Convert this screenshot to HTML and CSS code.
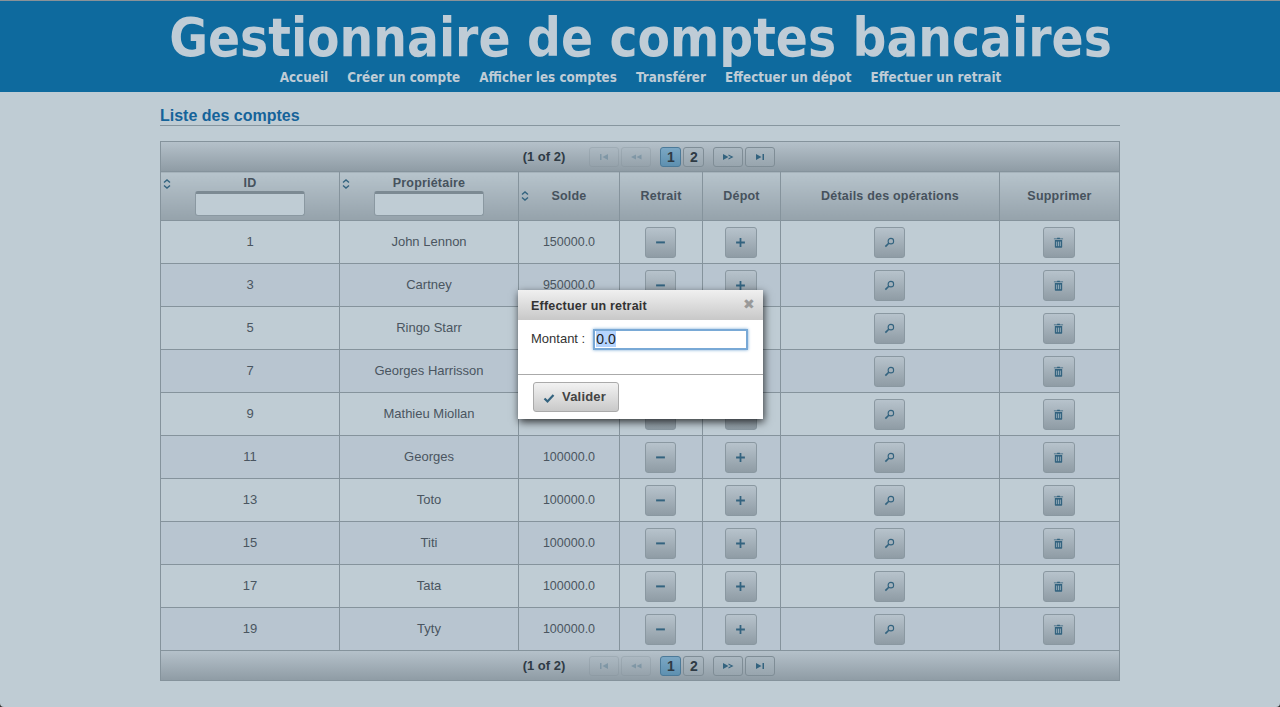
FILE: index.html

```html
<!DOCTYPE html>
<html lang="fr">
<head>
  <meta charset="UTF-8">
  <title>Gestionnaire de comptes bancaires</title>
  <link rel="stylesheet" href="styles.css">
</head>
<body>
  <svg class="defs" width="0" height="0">
    <symbol id="i-sort" viewBox="0 0 8 10"><path d="M1 3.500 4 1 7 3.500M1 6.500 4 9 7 6.500" fill="none" stroke="#33637f" stroke-width="1.400"/></symbol>
    <symbol id="i-minus" viewBox="0 0 10 10"><rect x="1" y="4" width="8" height="1.800" fill="#33637f"/></symbol>
    <symbol id="i-plus" viewBox="0 0 10 10"><path d="M4.200 1h1.600v3.200H9v1.600H5.800V9H4.200V5.800H1V4.200h3.200z" fill="#33637f"/></symbol>
    <symbol id="i-search" viewBox="0 0 12 12"><circle cx="7.500" cy="4.500" r="3" fill="none" stroke="#33637f" stroke-width="1.200"/><path d="M5.200 6.800 1.500 10.500" stroke="#33637f" stroke-width="1.800"/></symbol>
    <symbol id="i-trash" viewBox="0 0 12 12"><path d="M4.500 1.500V.8h3v.7H11v1H1v-1zM2 3.300h8V11a.8.8 0 0 1-.8.8H2.800A.8.8 0 0 1 2 11z" fill="#33637f"/><path d="M4 5v5M6 5v5M8 5v5" stroke="#b4c2cc" stroke-width=".8"/></symbol>
    <symbol id="i-first" viewBox="0 0 12 8"><path d="M2 1h1.500v6H2zM10 1v6L4.500 4z"/></symbol>
    <symbol id="i-prev" viewBox="0 0 12 8"><path d="M6 1.500V6.500L1 4zM11.500 1.500V6.500L6.500 4z"/></symbol>
    <symbol id="i-next" viewBox="0 0 12 8"><path d="M1 1v6l5.500-3zM6.500 1.500V2.700L9 4 6.500 5.300V6.500L11.500 4z"/></symbol>
    <symbol id="i-last" viewBox="0 0 12 8"><path d="M2 1v6l5.500-3zM8.500 1H10v6H8.500z"/></symbol>
  </svg>

  <header class="banner">
    <h1>Gestionnaire de comptes bancaires</h1>
    <nav class="menu">
      <a href="#">Accueil</a>
      <a href="#">Créer un compte</a>
      <a href="#">Afficher les comptes</a>
      <a href="#">Transférer</a>
      <a href="#">Effectuer un dépot</a>
      <a href="#">Effectuer un retrait</a>
    </nav>
  </header>

  <main class="content">
    <h2>Liste des comptes</h2>
    <div class="datatable">
      <div class="paginator">
        <span class="page-count">(1 of 2)</span>
        <span class="page-group">
          <span class="pg-btn off"><svg><use href="#i-first"/></svg></span>
          <span class="pg-btn off"><svg><use href="#i-prev"/></svg></span>
        </span>
        <span class="page-group">
          <span class="pg-num current">1</span>
          <span class="pg-num">2</span>
        </span>
        <span class="page-group">
          <span class="pg-btn"><svg><use href="#i-next"/></svg></span>
          <span class="pg-btn"><svg><use href="#i-last"/></svg></span>
        </span>
      </div>
      <table>
        <thead>
          <tr>
            <th class="c-id"><svg class="sort top"><use href="#i-sort"/></svg>ID<input class="filter" type="text"></th>
            <th class="c-owner"><svg class="sort top"><use href="#i-sort"/></svg>Propriétaire<input class="filter" type="text"></th>
            <th class="c-amount"><svg class="sort"><use href="#i-sort"/></svg>Solde</th>
            <th class="c-out">Retrait</th>
            <th class="c-in">Dépot</th>
            <th class="c-ops">Détails des opérations</th>
            <th>Supprimer</th>
          </tr>
        </thead>
        <tbody>
          <tr><td>1</td><td>John Lennon</td><td>150000.0</td><td><span class="btn"><svg><use href="#i-minus"/></svg></span></td><td><span class="btn wide"><svg><use href="#i-plus"/></svg></span></td><td><span class="btn"><svg><use href="#i-search"/></svg></span></td><td><span class="btn wide"><svg><use href="#i-trash"/></svg></span></td></tr>
          <tr><td>3</td><td>Cartney</td><td>950000.0</td><td><span class="btn"><svg><use href="#i-minus"/></svg></span></td><td><span class="btn wide"><svg><use href="#i-plus"/></svg></span></td><td><span class="btn"><svg><use href="#i-search"/></svg></span></td><td><span class="btn wide"><svg><use href="#i-trash"/></svg></span></td></tr>
          <tr><td>5</td><td>Ringo Starr</td><td></td><td><span class="btn"><svg><use href="#i-minus"/></svg></span></td><td><span class="btn wide"><svg><use href="#i-plus"/></svg></span></td><td><span class="btn"><svg><use href="#i-search"/></svg></span></td><td><span class="btn wide"><svg><use href="#i-trash"/></svg></span></td></tr>
          <tr><td>7</td><td>Georges Harrisson</td><td></td><td><span class="btn"><svg><use href="#i-minus"/></svg></span></td><td><span class="btn wide"><svg><use href="#i-plus"/></svg></span></td><td><span class="btn"><svg><use href="#i-search"/></svg></span></td><td><span class="btn wide"><svg><use href="#i-trash"/></svg></span></td></tr>
          <tr><td>9</td><td>Mathieu Miollan</td><td></td><td><span class="btn"><svg><use href="#i-minus"/></svg></span></td><td><span class="btn wide"><svg><use href="#i-plus"/></svg></span></td><td><span class="btn"><svg><use href="#i-search"/></svg></span></td><td><span class="btn wide"><svg><use href="#i-trash"/></svg></span></td></tr>
          <tr><td>11</td><td>Georges</td><td>100000.0</td><td><span class="btn"><svg><use href="#i-minus"/></svg></span></td><td><span class="btn wide"><svg><use href="#i-plus"/></svg></span></td><td><span class="btn"><svg><use href="#i-search"/></svg></span></td><td><span class="btn wide"><svg><use href="#i-trash"/></svg></span></td></tr>
          <tr><td>13</td><td>Toto</td><td>100000.0</td><td><span class="btn"><svg><use href="#i-minus"/></svg></span></td><td><span class="btn wide"><svg><use href="#i-plus"/></svg></span></td><td><span class="btn"><svg><use href="#i-search"/></svg></span></td><td><span class="btn wide"><svg><use href="#i-trash"/></svg></span></td></tr>
          <tr><td>15</td><td>Titi</td><td>100000.0</td><td><span class="btn"><svg><use href="#i-minus"/></svg></span></td><td><span class="btn wide"><svg><use href="#i-plus"/></svg></span></td><td><span class="btn"><svg><use href="#i-search"/></svg></span></td><td><span class="btn wide"><svg><use href="#i-trash"/></svg></span></td></tr>
          <tr><td>17</td><td>Tata</td><td>100000.0</td><td><span class="btn"><svg><use href="#i-minus"/></svg></span></td><td><span class="btn wide"><svg><use href="#i-plus"/></svg></span></td><td><span class="btn"><svg><use href="#i-search"/></svg></span></td><td><span class="btn wide"><svg><use href="#i-trash"/></svg></span></td></tr>
          <tr><td>19</td><td>Tyty</td><td>100000.0</td><td><span class="btn"><svg><use href="#i-minus"/></svg></span></td><td><span class="btn wide"><svg><use href="#i-plus"/></svg></span></td><td><span class="btn"><svg><use href="#i-search"/></svg></span></td><td><span class="btn wide"><svg><use href="#i-trash"/></svg></span></td></tr>
        </tbody>
      </table>
      <div class="paginator bottom">
        <span class="page-count">(1 of 2)</span>
        <span class="page-group">
          <span class="pg-btn off"><svg><use href="#i-first"/></svg></span>
          <span class="pg-btn off"><svg><use href="#i-prev"/></svg></span>
        </span>
        <span class="page-group">
          <span class="pg-num current">1</span>
          <span class="pg-num">2</span>
        </span>
        <span class="page-group">
          <span class="pg-btn"><svg><use href="#i-next"/></svg></span>
          <span class="pg-btn"><svg><use href="#i-last"/></svg></span>
        </span>
      </div>
    </div>
  </main>

  <div class="dialog">
    <div class="dialog-title">
      <span>Effectuer un retrait</span>
      <span class="dialog-close">✖</span>
    </div>
    <div class="dialog-body">
      <label for="montant">Montant :</label>
      <span class="amount-input" id="montant"><span class="selected">0.0</span></span>
    </div>
    <div class="dialog-foot">
      <span class="validate">
        <svg viewBox="0 0 12 12"><path d="M1.500 6.500 4.500 9.500 10.500 3" fill="none" stroke="#33637f" stroke-width="2.200"/></svg>
        Valider
      </span>
    </div>
  </div>
</body>
</html>
```

FILE: styles.css

```css
html { height: 100%; background: #333; }
body { margin: 0; height: 100%; background: #bfccd4; border-radius: 0 0 4px 4px; font-family: "Liberation Sans", Arial, sans-serif; color: #4a5560; overflow: hidden; }
.defs { position: absolute; }

.banner { height: 91px; background: #0e6a9e; border-top: 1px solid #8a9298; text-align: center; }
.banner h1 { margin: 0; padding: 8px 0 0 1px; height: 56px; font: bold 52.600px/58px "DejaVu Sans", Verdana, sans-serif; font-stretch: condensed; color: #bfccd6; white-space: nowrap; }
.menu { display: flex; justify-content: center; gap: 19.200px; padding: 5px 0 0 1px; }
.menu a { font: bold 13.350px/16px "DejaVu Sans", Verdana, sans-serif; font-stretch: condensed; color: #bfccd6; text-decoration: none; }

.content { width: 960px; margin: 0 auto; }
.content h2 { margin: 0; padding-top: 14px; height: 19px; font-size: 16px; line-height: 19px; font-weight: bold; color: #15639a; border-bottom: 1px solid #87969f; box-sizing: content-box; }

.datatable { margin-top: 15px; }
.paginator { display: flex; align-items: center; justify-content: center; height: 29px; padding-left: 18px; gap: 9px; background: linear-gradient(#b5c1ca, #8f9ca5); border: 1px solid #85939c; border-bottom: 0; }
.paginator.bottom { border-top: 0; border-bottom: 1px solid #85939c; height: 29px; }
.page-count { font-size: 13px; font-weight: bold; color: #2f3b45; margin-right: 15px; }
.page-group { display: flex; gap: 2px; }
.pg-btn { display: flex; align-items: center; justify-content: center; width: 28px; height: 18px; border: 1px solid #7f8d96; border-radius: 3px; background: linear-gradient(#abb8c1, #98a5ae); fill: #33637f; }
.pg-btn svg { width: 12px; height: 8px; }
.pg-btn.off { opacity: .3; }
.pg-num { display: flex; align-items: center; justify-content: center; width: 19px; height: 18px; border: 1px solid #7f8d96; border-radius: 3px; background: linear-gradient(#abb8c1, #98a5ae); font-size: 14px; font-weight: bold; color: #2f3b45; }
.pg-num.current { background: linear-gradient(#7ba7c4, #5e90b0); border-color: #4c7a99; }

table { width: 960px; border-collapse: collapse; table-layout: fixed; }
th, td { border: 1px solid #85939c; padding: 0; text-align: center; vertical-align: middle; }
th { position: relative; height: 48px; background: linear-gradient(#b7c4cc, #95a2ab); font-size: 12.500px; line-height: 15px; font-weight: bold; color: #46525d; letter-spacing: .2px; }
td { height: 42px; font-size: 13px; line-height: 14px; color: #4a5560; }
td:nth-child(3) { font-size: 12.500px; }
tbody tr:nth-child(even) td { background: #b8c5d0; }
.c-id, .c-owner { width: 178px; }
.c-amount { width: 100px; }
.c-out { width: 82px; }
.c-in { width: 77px; }
.c-ops { width: 218px; }
.sort { position: absolute; left: 2px; top: 19px; width: 8px; height: 10px; }
.sort.top { top: 7px; }
.filter { display: block; box-sizing: border-box; width: 110px; height: 25px; margin: 0 auto; border: 1px solid #8a98a1; border-top: 3px solid #7c8a93; border-radius: 3px; background: #bfccd4; }
.btn { display: inline-flex; align-items: center; justify-content: center; vertical-align: middle; width: 29px; height: 29px; margin-right: 2px; border: 1px solid #8a98a1; border-radius: 3px; background: linear-gradient(#b7c3cc, #8f9ca5); }
.btn.wide { width: 30px; }
.btn svg { width: 11px; height: 11px; }

.dialog { position: absolute; left: 518px; top: 290px; width: 245px; height: 129px; background: #fff; box-shadow: 1px 3px 8px rgba(0, 0, 0, .75); color: #333; }
.dialog-title { display: flex; justify-content: space-between; align-items: center; box-sizing: border-box; height: 30px; padding: 2px 8px 0 13px; background: linear-gradient(#f0f0f0, #c8c8c8); font-size: 12.500px; font-weight: bold; letter-spacing: .2px; }
.dialog-close { color: #999; font-size: 14px; margin-top: -4px; font-family: "DejaVu Sans", sans-serif; }
.dialog-body { display: flex; align-items: center; gap: 8px; height: 54px; padding: 0 15px 0 13px; border-bottom: 1px solid #aaa; font-size: 13px; }
.dialog-body label { margin-top: -17px; }
.amount-input { box-sizing: border-box; flex: 1; height: 21px; margin-top: -15px; padding: 1px 0 1px 1px; border: 2px solid #79a9d6; box-shadow: 0 0 3px #79a9d6; font-size: 14px; line-height: 15px; color: #222; }
.selected { background: #b5d5ff; }
.dialog-foot { padding: 7px 15px; }
.validate { display: flex; align-items: center; gap: 7px; box-sizing: border-box; width: 86px; height: 30px; padding: 0 0 2px 9px; border: 1px solid #aaa; border-radius: 3px; background: linear-gradient(#f2f2f2, #c9c9c9); font-size: 13px; font-weight: bold; letter-spacing: .2px; color: #444; }
.validate svg { width: 12px; height: 12px; margin-top: 3px; }
```
